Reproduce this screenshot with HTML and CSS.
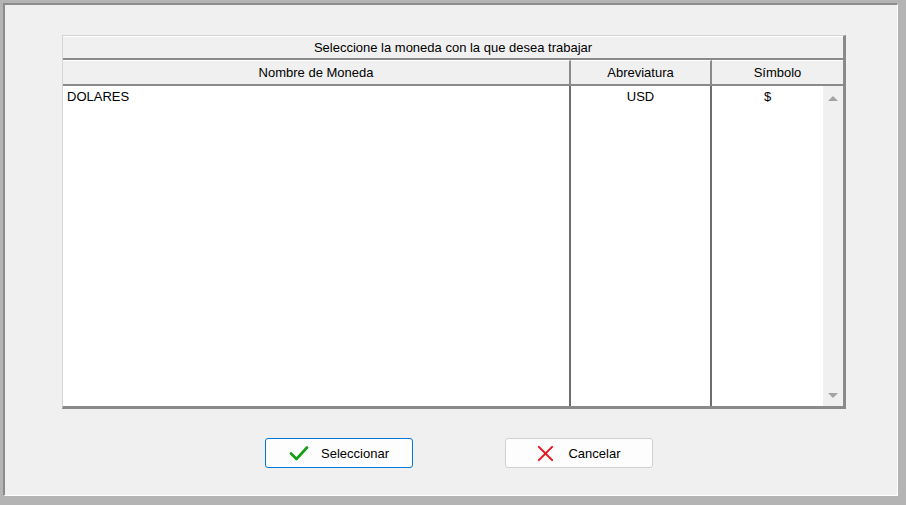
FILE: index.html
```html
<!DOCTYPE html>
<html lang="es">
<head>
    <meta charset="UTF-8">
    <title>Seleccionar Moneda</title>
    <link rel="stylesheet" href="styles.css">
</head>
<body>

<div class="window">
    <div class="grid">
        <div class="grid-title">Seleccione la moneda con la que desea trabajar</div>
        <div class="grid-head">
            <div class="hcell col-nombre">Nombre de Moneda</div>
            <div class="hcell col-abrev">Abreviatura</div>
            <div class="hcell col-simbolo">Símbolo</div>
        </div>
        <div class="grid-body">
            <div class="bcol col-nombre">
                <div class="row left">DOLARES</div>
            </div>
            <div class="bcol col-abrev">
                <div class="row">USD</div>
            </div>
            <div class="bcol col-simbolo last">
                <div class="row">$</div>
            </div>
            <div class="scrollbar">
                <span class="arrow up"></span>
                <span class="arrow down"></span>
            </div>
        </div>
    </div>

    <div class="buttons">
        <button class="btn btn-focus">
            <svg width="20" height="16" viewBox="0 0 20 16">
                <path d="M2 8.5 L7.5 14 L18 2.5" fill="none" stroke="#12a012" stroke-width="2.6" stroke-linecap="round" stroke-linejoin="round"/>
            </svg>
            <span>Seleccionar</span>
        </button>
        <button class="btn btn-cancel">
            <svg width="17" height="17" viewBox="0 0 18 18">
                <path d="M2 2 L16 16 M16 2 L2 16" fill="none" stroke="#e8141e" stroke-width="2.2" stroke-linecap="round"/>
            </svg>
            <span>Cancelar</span>
        </button>
    </div>
</div>

</body>
</html>
```

FILE: styles.css
```css
body {
    margin: 0;
    background-color: #b4b4b4;
    font-family: "Liberation Sans", Arial, sans-serif;
    font-size: 13px;
    color: #000;
}
.window {
    box-sizing: border-box;
    width: 895px;
    height: 493px;
    margin: 3px 0 0 3px;
    background-color: #f0f0f0;
    border-top: 2px solid #8c8c8c;
    border-left: 2px solid #8c8c8c;
    border-right: 1px solid #ffffff;
    border-bottom: 1px solid #ffffff;
    padding: 30px 0 0 57px;
}
.grid {
    box-sizing: border-box;
    width: 784px;
    height: 374px;
    border-top: 1px solid #d4d4d4;
    border-left: 1px solid #d4d4d4;
    border-right: 3px solid #8a8a8a;
    border-bottom: 3px solid #8a8a8a;
    display: flex;
    flex-direction: column;
}
.grid-title {
    box-sizing: border-box;
    height: 24px;
    line-height: 22px;
    text-align: center;
    background-color: #f0f0f0;
    border-top: 1px solid #ffffff;
    border-bottom: 2px solid #8a8a8a;
}
.grid-head {
    display: flex;
    height: 26px;
}
.hcell {
    box-sizing: border-box;
    height: 26px;
    line-height: 24px;
    text-align: center;
    background-color: #f0f0f0;
    border-top: 1px solid #ffffff;
    border-right: 2px solid #8a8a8a;
    border-bottom: 2px solid #8a8a8a;
}
.hcell.col-simbolo {
    border-right: none;
}
.col-nombre {
    width: 508px;
}
.col-abrev {
    width: 141px;
}
.col-simbolo {
    flex: 1;
}
.grid-body {
    flex: 1;
    display: flex;
    background-color: #ffffff;
}
.bcol {
    box-sizing: border-box;
    border-right: 2px solid #6e6e6e;
}
.bcol.col-simbolo {
    flex: none;
    width: 111px;
    border-right: none;
}
.row {
    height: 22px;
    line-height: 22px;
    text-align: center;
}
.row.left {
    text-align: left;
    padding-left: 4px;
}
.scrollbar {
    flex: 1;
    position: relative;
    background-color: #f0f0f0;
}
.arrow {
    position: absolute;
    left: 5px;
    width: 0;
    height: 0;
    border-left: 5px solid transparent;
    border-right: 5px solid transparent;
}
.arrow.up {
    top: 10px;
    border-bottom: 5px solid #a3a3a3;
}
.arrow.down {
    bottom: 8px;
    border-top: 5px solid #a3a3a3;
}
.buttons {
    display: flex;
    gap: 92px;
    margin: 29px 0 0 203px;
}
.btn {
    box-sizing: border-box;
    width: 148px;
    height: 30px;
    display: flex;
    align-items: center;
    justify-content: center;
    gap: 12px;
    background-color: #fdfdfd;
    border: 1px solid #d0d0d0;
    border-radius: 3px;
    font-family: "Liberation Sans", Arial, sans-serif;
    font-size: 13px;
    color: #000;
    padding: 0;
}
.btn-focus {
    border: 1px solid #0078d7;
}
.btn-cancel {
    gap: 14px;
}
```
